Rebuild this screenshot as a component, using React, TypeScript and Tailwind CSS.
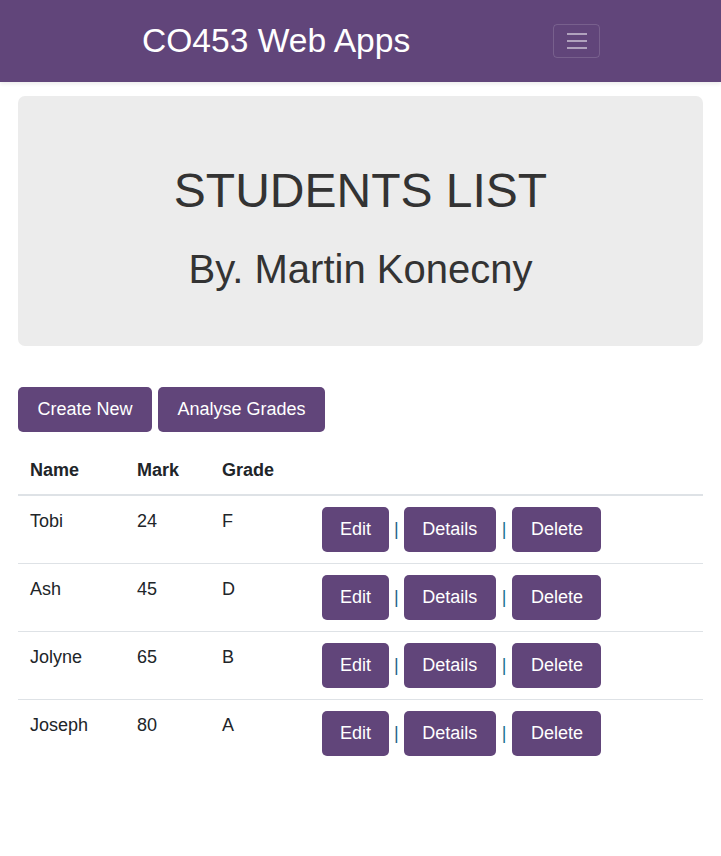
const students = [
  { name: "Tobi", mark: 24, grade: "F" },
  { name: "Ash", mark: 45, grade: "D" },
  { name: "Jolyne", mark: 65, grade: "B" },
  { name: "Joseph", mark: 80, grade: "A" },
];

const btn = "bg-[#61457a] text-white rounded-[5px] text-[18px] leading-[27px]";

export default function App() {
  return (
    <div className="min-h-[856px] bg-white text-[#212529] font-['Liberation_Sans',Arial,sans-serif]">
      <nav className="h-[82px] bg-[#61457a] flex items-center justify-between pl-[142px] pr-[121px] shadow-[0_2px_4px_rgba(0,0,0,0.08)]">
        <span className="text-white text-[33.6px] leading-none -mt-[1px]">CO453 Web Apps</span>
        <button className="w-[47px] h-[34px] border border-white/15 rounded-[4px] flex flex-col items-center justify-center gap-[5px]">
          <span className="block w-[20px] h-[2px] bg-white/50" />
          <span className="block w-[20px] h-[2px] bg-white/50" />
          <span className="block w-[20px] h-[2px] bg-white/50" />
        </button>
      </nav>

      <main className="px-[18px] pt-[14px]">
        <div className="bg-[#ececec] rounded-[7px] h-[250px] flex flex-col items-center pt-[71px]">
          <h1 className="text-[48px] leading-none text-[#333]">STUDENTS LIST</h1>
          <h2 className="text-[40px] leading-none text-[#333] mt-[34px]">By. Martin Konecny</h2>
        </div>

        <div className="flex gap-[6px] mt-[41px]">
          <button className={btn + " px-[19.5px] py-[9px]"}>Create New</button>
          <button className={btn + " px-[19.5px] py-[9px]"}>Analyse Grades</button>
        </div>

        <table className="w-full mt-[11px] text-[18px] border-collapse">
          <thead>
            <tr className="border-b-2 border-[#dee2e6]">
              <th className="text-left font-bold w-[107px] px-[12px] pt-[14px] pb-[10px]">Name</th>
              <th className="text-left font-bold w-[85px] px-[12px] pt-[14px] pb-[10px]">Mark</th>
              <th className="text-left font-bold w-[100px] px-[12px] pt-[14px] pb-[10px]">Grade</th>
              <th></th>
            </tr>
          </thead>
          <tbody>
            {students.map((s) => (
              <tr key={s.name} className="border-b border-[#dee2e6] last:border-b-0 align-top">
                <td className="px-[12px] pt-[12px]">{s.name}</td>
                <td className="px-[12px] pt-[12px]">{s.mark}</td>
                <td className="px-[12px] pt-[12px]">{s.grade}</td>
                <td className="px-[12px] py-[11px]">
                  <div className="flex items-center">
                    <button className={btn + " px-[18px] py-[9px]"}>Edit</button>
                    <span className="text-[#1f5e8a] mx-[5px] text-[18px]">|</span>
                    <button className={btn + " px-[18.5px] py-[9px]"}>Details</button>
                    <span className="text-[#1a7394] ml-[6px] mr-[6px] text-[18px]">|</span>
                    <button className={btn + " px-[18.5px] py-[9px]"}>Delete</button>
                  </div>
                </td>
              </tr>
            ))}
          </tbody>
        </table>
      </main>
    </div>
  );
}
